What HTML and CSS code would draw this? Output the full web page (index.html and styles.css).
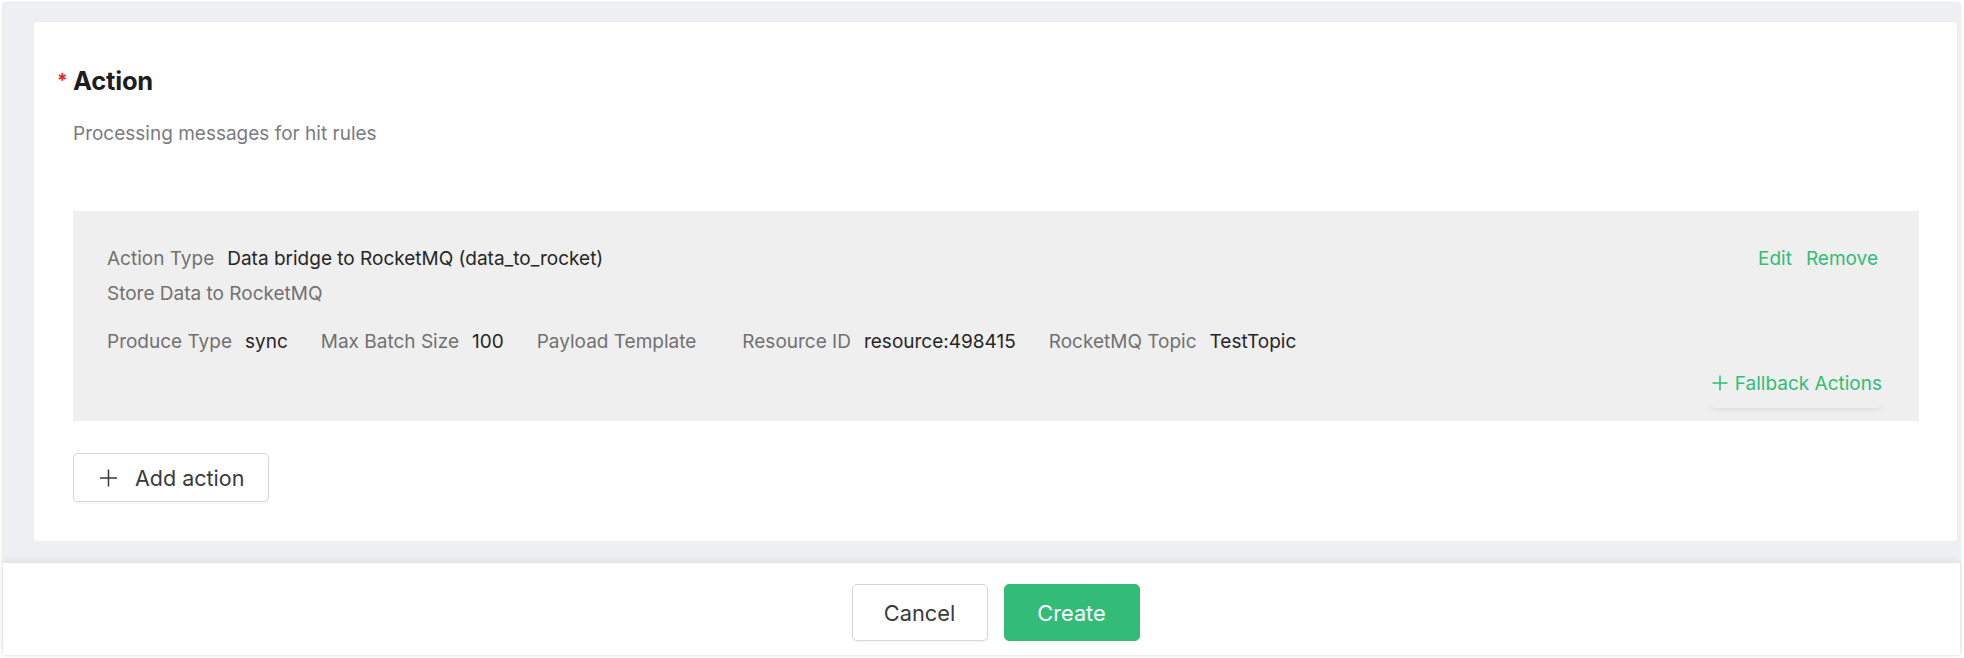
FILE: index.html
```html
<!DOCTYPE html>
<html lang="en">
<head>
<meta charset="utf-8">
<title>Action</title>
<link rel="stylesheet" href="styles.css">
</head>
<body>
<div class="frame">
  <div class="scroll">
    <section class="card">
      <h2 class="title"><span class="req">*</span>Action</h2>
      <p class="desc">Processing messages for hit rules</p>
      <div class="action-item">
        <div class="row row-head">
          <div class="pair"><span class="label">Action Type</span><span class="value">Data bridge to RocketMQ (data_to_rocket)</span></div>
          <div class="ops"><span class="link">Edit</span><span class="link">Remove</span></div>
        </div>
        <div class="row sub">Store Data to RocketMQ</div>
        <div class="row params">
          <div class="pair"><span class="label">Produce Type</span><span class="value">sync</span></div>
          <div class="pair"><span class="label">Max Batch Size</span><span class="value">100</span></div>
          <div class="pair"><span class="label">Payload Template</span><span class="value"></span></div>
          <div class="pair"><span class="label">Resource ID</span><span class="value">resource:498415</span></div>
          <div class="pair"><span class="label">RocketMQ Topic</span><span class="value">TestTopic</span></div>
        </div>
        <div class="fallback-row">
          <button class="fallback-btn" type="button">
            <svg class="plus" width="16" height="16" viewBox="0 0 16 16" aria-hidden="true"><path d="M8 0.5V15.5M0.5 8H15.5" stroke="currentColor" stroke-width="1.5" fill="none"/></svg>
            <span>Fallback Actions</span>
          </button>
        </div>
      </div>
      <button class="add-btn" type="button">
        <svg class="plus" width="17" height="18" viewBox="0 0 17 18" aria-hidden="true"><path d="M8.5 0.5V17.5M0 9H17" stroke="currentColor" stroke-width="1.5" fill="none"/></svg>
        <span>Add action</span>
      </button>
    </section>
  </div>
  <footer class="footer">
    <button class="btn btn-default" type="button">Cancel</button>
    <button class="btn btn-primary" type="button">Create</button>
  </footer>
</div>
</body>
</html>
```

FILE: styles.css
```css
* { box-sizing: border-box; }

html, body {
  margin: 0;
  background: #ffffff;
}

body {
  padding: 3px 4px 3px 3px;
  font-family: Inter, "Liberation Sans", Arial, sans-serif;
  font-size: 19px;
  line-height: 24px;
  color: #262626;
}

.frame {
  width: 1957px;
  height: 652px;
  display: flex;
  flex-direction: column;
  background: #edeff3;
  box-shadow: 0 0 3px rgba(0, 0, 0, 0.18);
}

.scroll {
  height: 560px;
  padding: 19px 3px 22px 31px;
}

.card {
  background: #ffffff;
  border-radius: 4px;
  padding: 43px 38px 39px 39px;
}

.title {
  margin: 0;
  font-size: 25.5px;
  line-height: 32px;
  font-weight: 700;
  color: #1d1d1f;
  letter-spacing: -0.2px;
}

.req {
  display: inline-block;
  width: 0;
  margin-left: -16px;
  margin-right: 16px;
  color: #ee1d2c;
  font-size: 19px;
  line-height: 1;
  font-weight: 700;
  vertical-align: 3px;
}

.desc {
  margin: 25px 0 0;
  color: #7a7b80;
}

.action-item {
  margin-top: 65px;
  height: 210px;
  background: #efefef;
  padding: 36px 36px 13px 34px;
  display: flex;
  flex-direction: column;
}

.row {
  display: flex;
  align-items: center;
  height: 24px;
}

.row-head {
  justify-content: space-between;
}

.sub {
  margin-top: 11px;
  color: #717171;
}

.params {
  margin-top: 24px;
  gap: 33px;
}

.pair {
  display: flex;
  gap: 13px;
}

.label {
  color: #717171;
}

.value {
  color: #262626;
}

.ops {
  display: flex;
  gap: 14px;
  padding-right: 5px;
}

.link {
  color: #30bd78;
}

.fallback-row {
  margin-top: 4px;
  display: flex;
  justify-content: flex-end;
}

.fallback-btn {
  height: 50px;
  display: flex;
  align-items: center;
  gap: 7px;
  padding: 0 1px 0 3px;
  border: none;
  border-radius: 6px;
  background: transparent;
  box-shadow: 0 5px 3px -2px rgba(0, 0, 0, 0.05);
  font-family: inherit;
  font-size: 19px;
  color: #30bd78;
}

.plus { display: block; flex: none; }

.add-btn {
  margin-top: 32px;
  height: 49px;
  display: inline-flex;
  align-items: center;
  gap: 18px;
  padding: 0 24px 0 26px;
  background: #ffffff;
  border: 1px solid #d6d6d9;
  border-radius: 5px;
  box-shadow: 0 2px 3px rgba(0, 0, 0, 0.04);
  font-family: inherit;
  font-size: 21.5px;
  color: #3a3a3c;
}

.footer {
  height: 92px;
  background: #ffffff;
  box-shadow: 0 -3px 6px rgba(0, 0, 0, 0.06);
  padding: 21px 3px 0 31px;
  display: flex;
  justify-content: center;
  align-items: flex-start;
  gap: 16px;
}

.btn {
  width: 136px;
  height: 57px;
  border-radius: 5px;
  font-family: inherit;
  font-size: 21.75px;
}

.btn-default {
  background: #ffffff;
  border: 1px solid #d6d6d9;
  color: #3a3a3c;
  box-shadow: 0 2px 3px rgba(0, 0, 0, 0.03);
}

.btn-primary {
  background: #33bc78;
  border: 1px solid #33bc78;
  color: #ffffff;
}
```
